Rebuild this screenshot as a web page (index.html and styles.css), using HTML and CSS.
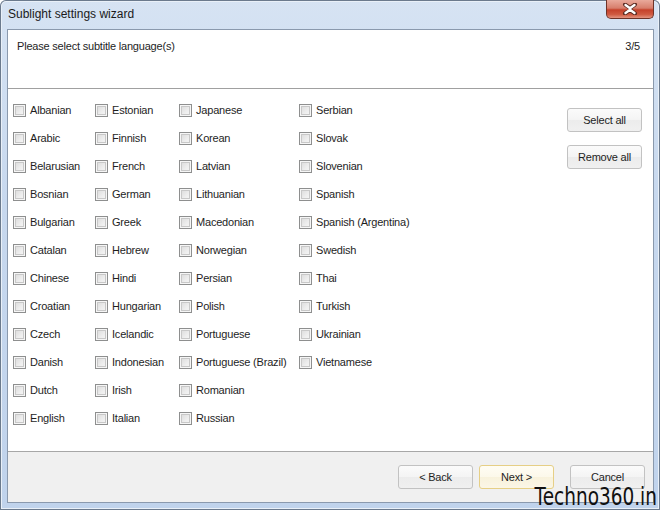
FILE: index.html
```html
<!DOCTYPE html>
<html>
<head>
<meta charset="utf-8">
<link rel="stylesheet" href="styles.css">
</head>
<body>
<div class="window">
  <div class="titlebar">
    <span class="title">Sublight settings wizard</span>
    <div class="close">
      <svg width="16" height="12" viewBox="0 0 16 12">
        <path d="M3 1.5 L8 5 L13 1.5 M3 10.5 L8 7 L13 10.5" stroke="#5a2a22" stroke-width="4" fill="none" stroke-linecap="round"/>
        <path d="M3.5 2 L8 5.2 L12.5 2 M3.5 10 L8 6.8 L12.5 10" stroke="#ffffff" stroke-width="2.4" fill="none" stroke-linecap="round"/>
      </svg>
    </div>
  </div>
  <div class="client">
    <div class="header">
      <span>Please select subtitle language(s)</span>
      <span>3/5</span>
    </div>
    <div class="main">
      <div class="grid">
        <label class="item"><span class="box"></span>Albanian</label>
        <label class="item"><span class="box"></span>Arabic</label>
        <label class="item"><span class="box"></span>Belarusian</label>
        <label class="item"><span class="box"></span>Bosnian</label>
        <label class="item"><span class="box"></span>Bulgarian</label>
        <label class="item"><span class="box"></span>Catalan</label>
        <label class="item"><span class="box"></span>Chinese</label>
        <label class="item"><span class="box"></span>Croatian</label>
        <label class="item"><span class="box"></span>Czech</label>
        <label class="item"><span class="box"></span>Danish</label>
        <label class="item"><span class="box"></span>Dutch</label>
        <label class="item"><span class="box"></span>English</label>
        <label class="item"><span class="box"></span>Estonian</label>
        <label class="item"><span class="box"></span>Finnish</label>
        <label class="item"><span class="box"></span>French</label>
        <label class="item"><span class="box"></span>German</label>
        <label class="item"><span class="box"></span>Greek</label>
        <label class="item"><span class="box"></span>Hebrew</label>
        <label class="item"><span class="box"></span>Hindi</label>
        <label class="item"><span class="box"></span>Hungarian</label>
        <label class="item"><span class="box"></span>Icelandic</label>
        <label class="item"><span class="box"></span>Indonesian</label>
        <label class="item"><span class="box"></span>Irish</label>
        <label class="item"><span class="box"></span>Italian</label>
        <label class="item"><span class="box"></span>Japanese</label>
        <label class="item"><span class="box"></span>Korean</label>
        <label class="item"><span class="box"></span>Latvian</label>
        <label class="item"><span class="box"></span>Lithuanian</label>
        <label class="item"><span class="box"></span>Macedonian</label>
        <label class="item"><span class="box"></span>Norwegian</label>
        <label class="item"><span class="box"></span>Persian</label>
        <label class="item"><span class="box"></span>Polish</label>
        <label class="item"><span class="box"></span>Portuguese</label>
        <label class="item"><span class="box"></span>Portuguese (Brazil)</label>
        <label class="item"><span class="box"></span>Romanian</label>
        <label class="item"><span class="box"></span>Russian</label>
        <label class="item"><span class="box"></span>Serbian</label>
        <label class="item"><span class="box"></span>Slovak</label>
        <label class="item"><span class="box"></span>Slovenian</label>
        <label class="item"><span class="box"></span>Spanish</label>
        <label class="item"><span class="box"></span>Spanish (Argentina)</label>
        <label class="item"><span class="box"></span>Swedish</label>
        <label class="item"><span class="box"></span>Thai</label>
        <label class="item"><span class="box"></span>Turkish</label>
        <label class="item"><span class="box"></span>Ukrainian</label>
        <label class="item"><span class="box"></span>Vietnamese</label>
      </div>
      <div class="side">
        <button class="btn">Select all</button>
        <button class="btn">Remove all</button>
      </div>
    </div>
    <div class="footer">
      <button class="btn">&lt; Back</button>
      <button class="btn btn-default">Next &gt;</button>
      <button class="btn btn-cancel">Cancel</button>
    </div>
  </div>
  <div class="watermark">Techno360.in</div>
</div>
</body>
</html>
```
FILE: styles.css
```css
html, body {
  margin: 0;
  padding: 0;
}
body {
  width: 660px;
  height: 510px;
  overflow: hidden;
  background: #ffffff;
  font-family: "Liberation Sans", Arial, sans-serif;
  font-size: 11px;
  letter-spacing: -0.2px;
  color: #1e1e1e;
}
.window {
  position: relative;
  box-sizing: border-box;
  width: 660px;
  height: 510px;
  padding: 0 6px 7px 7px;
  background: linear-gradient(to bottom, #d6e3f3 0%, #c7d8ee 40%, #c0d3ec 100%);
  border-radius: 6px 6px 0 0;
  box-shadow: inset 0 0 0 1px #6b7a8d, inset 0 0 0 2px #e9f0f8;
  display: flex;
  flex-direction: column;
}
.titlebar {
  height: 29px;
  display: flex;
  align-items: center;
  justify-content: space-between;
  flex-shrink: 0;
}
.title {
  font-size: 12px;
  letter-spacing: 0;
  color: #1a1a1a;
  margin-left: 1px;
  margin-top: -1px;
}
.close {
  align-self: flex-start;
  width: 48px;
  height: 19px;
  margin-right: 0;
  box-sizing: border-box;
  border: 1px solid #6e3328;
  border-top: none;
  border-radius: 0 0 5px 5px;
  background: linear-gradient(to bottom, #e9a99b 0%, #d77e6c 45%, #c5412b 55%, #cf5a41 80%, #e39380 100%);
  display: flex;
  align-items: center;
  justify-content: center;
}
.client {
  flex: 1;
  display: flex;
  flex-direction: column;
  border: 1px solid #8a99ad;
  background: #ffffff;
}
.header {
  height: 59px;
  box-sizing: border-box;
  padding: 10px 13px 0 9px;
  display: flex;
  justify-content: space-between;
  align-items: flex-start;
  border-bottom: 1px solid #a0a0a0;
  flex-shrink: 0;
}
.main {
  flex: 1;
  display: flex;
  justify-content: space-between;
  padding: 7px 11px 0 5px;
}
.grid {
  display: grid;
  grid-template-columns: 82px 84px 120px 130px;
  grid-template-rows: repeat(12, 28px);
  grid-auto-flow: column;
}
.item {
  display: flex;
  align-items: center;
  gap: 4px;
  white-space: nowrap;
}
.box {
  width: 13px;
  height: 13px;
  box-sizing: border-box;
  border: 1px solid #8e8f8f;
  background: linear-gradient(135deg, #d8d8d8 0%, #eeeeee 60%, #f8f8f8 100%);
  box-shadow: inset 0 0 0 1px #f6f6f6, inset 0 0 0 2px #c8c8c8;
  flex-shrink: 0;
}
.side {
  display: flex;
  flex-direction: column;
  gap: 13px;
  padding-top: 12px;
}
.btn {
  width: 75px;
  height: 24px;
  box-sizing: border-box;
  font-family: "Liberation Sans", Arial, sans-serif;
  font-size: 11px;
  letter-spacing: -0.2px;
  color: #1e1e1e;
  border: 1px solid #c2c2c2;
  border-radius: 3px;
  background: linear-gradient(to bottom, #fbfbfb 0%, #f4f4f4 50%, #ececec 51%, #f0f0f0 100%);
  padding: 0;
  margin: 0;
}
.btn-default {
  border-color: #e6cf86;
  background: linear-gradient(to bottom, #fffdf4 0%, #fcf8ea 50%, #f8f2dc 51%, #fbf6e6 100%);
}
.footer {
  height: 51px;
  box-sizing: border-box;
  border-top: 1px solid #a7a7a7;
  background: #f0f0f0;
  display: flex;
  justify-content: flex-end;
  align-items: flex-start;
  padding: 13px 8px 0 0;
  gap: 6px;
  flex-shrink: 0;
}
.btn-cancel {
  margin-left: 10px;
}
.watermark {
  position: absolute;
  right: 3px;
  bottom: 0;
  font-family: "DejaVu Sans", sans-serif;
  font-size: 24px;
  line-height: 26px;
  letter-spacing: 0;
  color: #111111;
  transform: scaleX(0.77);
  transform-origin: right bottom;
}
```
